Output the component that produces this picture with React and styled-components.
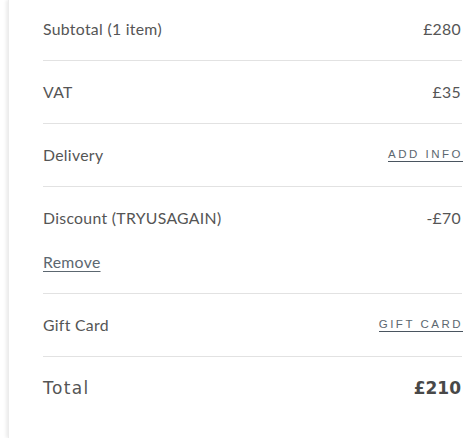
import styled, { createGlobalStyle } from "styled-components";

const GlobalStyle = createGlobalStyle`
  html, body {
    margin: 0;
    background: #fff;
  }
  body {
    font-family: "Lato", "Open Sans", sans-serif;
    color: #555;
  }
`;

const summary = [
  { label: "Subtotal (1 item)", value: "£280" },
  { label: "VAT", value: "£35" },
  { label: "Delivery", action: "Add info" },
  { label: "Discount (TRYUSAGAIN)", value: "-£70", remove: true },
  { label: "Gift Card", action: "Gift card" },
];

export default function App() {
  return (
    <>
      <GlobalStyle />
      <Page>
        <Panel>
          {summary.map((item) => (
            <Row key={item.label}>
              <Line>
                <Label>{item.label}</Label>
                {item.action ? (
                  <ActionLink href="#">{item.action}</ActionLink>
                ) : (
                  <Value>{item.value}</Value>
                )}
              </Line>
              {item.remove && <RemoveLink href="#">Remove</RemoveLink>}
            </Row>
          ))}
          <TotalRow>
            <TotalLabel>Total</TotalLabel>
            <TotalValue>£210</TotalValue>
          </TotalRow>
        </Panel>
      </Page>
    </>
  );
}

const Page = styled.div`
  padding-left: 8px;
  height: 438px;
  overflow: hidden;
`;

const Panel = styled.div`
  height: 100%;
  padding: 0 14px 0 34px;
  box-shadow: -2px 0 3px rgba(0, 0, 0, 0.08);
  border-left: 1px solid #ececec;
`;

const Row = styled.div`
  display: flex;
  flex-direction: column;
  gap: 23px;
  padding: 20px 0 21px;
  border-bottom: 1px solid #e2e2e2;
  &:first-child {
    padding-top: 18px;
  }
`;

const Line = styled.div`
  display: flex;
  justify-content: space-between;
  align-items: center;
  height: 21px;
  padding-right: 1px;
`;

const Label = styled.span`
  font-size: 15.8px;
  line-height: 21px;
  letter-spacing: 0.3px;
  color: #555;
`;

const Value = styled.span`
  font-size: 15.8px;
  line-height: 21px;
  letter-spacing: 0.3px;
  color: #555;
`;

const ActionLink = styled.a`
  font-family: "Liberation Sans", Arial, sans-serif;
  font-size: 11.5px;
  letter-spacing: 2.5px;
  text-transform: uppercase;
  color: #5c6770;
  text-decoration: none;
  border-bottom: 1.5px solid #4a5560;
  padding-bottom: 1px;
  margin-right: -2px;
`;

const RemoveLink = styled.a`
  align-self: flex-start;
  font-size: 15.8px;
  line-height: 21px;
  letter-spacing: 0.3px;
  color: #5c6770;
  text-decoration: underline;
  text-underline-offset: 3px;
`;

const TotalRow = styled.div`
  display: flex;
  justify-content: space-between;
  align-items: center;
  padding: 21px 1px 21px 0;
`;

const TotalLabel = styled.span`
  font-family: "DejaVu Sans", sans-serif;
  font-size: 17px;
  letter-spacing: 1.4px;
  color: #555;
`;

const TotalValue = styled.span`
  font-family: "DejaVu Sans", sans-serif;
  font-size: 17px;
  font-weight: bold;
  color: #484848;
`;
